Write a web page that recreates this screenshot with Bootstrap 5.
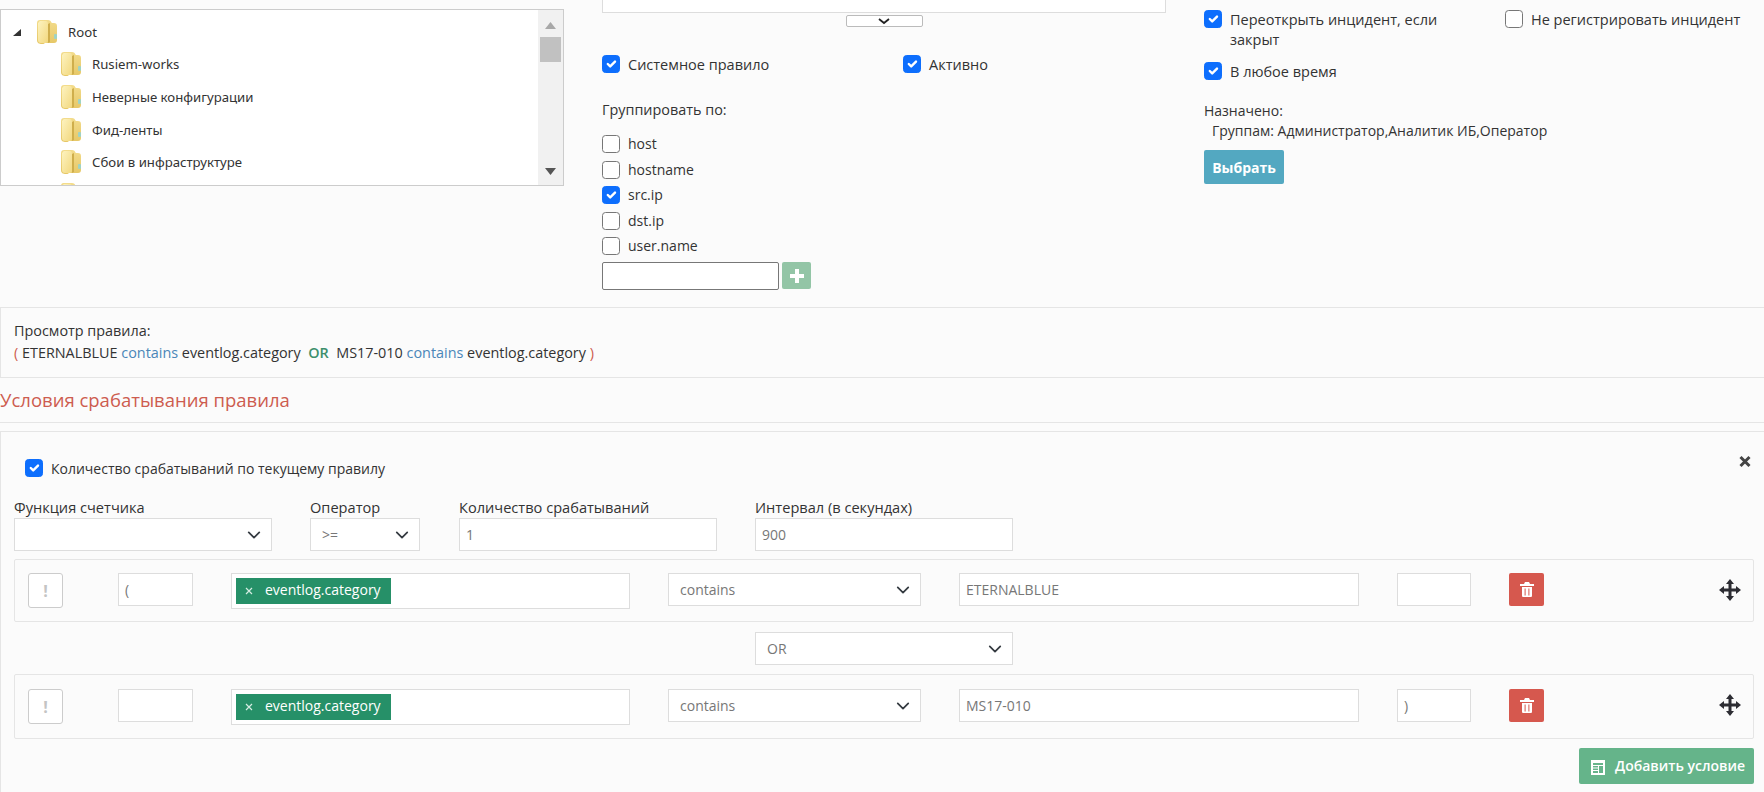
<!DOCTYPE html>
<html lang="ru">
<head>
  <meta charset="UTF-8" />
  <title>Правило</title>
  <meta name="viewport" content="width=device-width, initial-scale=1.0"/>
  <link href="https://cdn.jsdelivr.net/npm/bootstrap@5.3.3/dist/css/bootstrap.min.css" rel="stylesheet">
  <style>
    html, body { height: 792px; overflow: hidden; }
    body {
      background: #fbfbfb;
      color: #333;
      font-family: "Open Sans", "Noto Sans", sans-serif;
      font-size: 14px;
      line-height: 20px;
    }
    .form-check-input {
      width: 18px;
      height: 18px;
      margin: 0;
      flex: none;
      border-color: #777;
      border-radius: 4px;
    }
    .chk { display: flex; gap: 8px; align-items: flex-start; line-height: 19px; font-weight: 500; font-size: 14.5px; }

    /* top part */
    .top-part { display: flex; height: 307px; }
    .tree-col { width: 564px; padding-top: 9px; flex: none; }
    .mid-col { width: 564px; margin-left: 38px; flex: none; }
    .right-col { margin-left: 38px; padding-top: 10px; flex: 1; }
    .tree-box {
      height: 177px;
      background: #fff;
      border: 1px solid #ccc;
      display: flex;
      overflow: hidden;
      font-family: "Noto Sans", sans-serif;
      font-size: 13.200px;
    }
    .tree-list { flex: 1; overflow: hidden; padding: 8px 0 0 12px; }
    .tree-row { display: flex; align-items: center; height: 32.700px; gap: 11px; margin-left: 48px; white-space: nowrap; }
    .tree-row.is-root { margin-left: 0; height: 27px; margin-bottom: 3px; }
    .tree-row svg { flex: none; }
    .tree-arrow { margin-right: 5px; }
    .fake-scroll {
      width: 25px;
      background: #f1f1f1;
      display: flex;
      flex-direction: column;
      align-items: center;
      padding: 0 1px 0 0;
    }
    .scroll-up { margin-top: 12px; }
    .scroll-thumb { width: 21px; height: 25px; background: #c1c1c1; margin-top: 8px; }
    .scroll-down { margin-top: auto; margin-bottom: 10px; }
    .cut-box { height: 13px; background: #fff; border: 1px solid #ddd; border-top: 0; }
    .toggle-bar {
      width: 77px;
      height: 12px;
      margin: 2px auto 0;
      border: 1px solid #bbb;
      border-radius: 2px;
      background: #fff;
      display: flex;
      justify-content: center;
      align-items: center;
      padding: 0;
    }
    .flag-row { margin-top: 28px; display: flex; }
    .flag-row .chk:first-child { width: 301px; }
    .group-title { margin-top: 26px; font-weight: 500; font-size: 14.400px; }
    .group-list { margin-top: 15px; display: flex; flex-direction: column; gap: 7.500px; }
    .group-list .chk { height: 18px; line-height: 18px; font-weight: 400; font-size: 14px; }
    .add-group { display: flex; gap: 3px; margin-top: 7px; }
    .add-group input { width: 177px; height: 28px; border: 1px solid #777; border-radius: 2px; background: #fff; }
    .btn-plus {
      width: 29px;
      height: 27px;
      padding: 0;
      border: 0;
      border-radius: 2px;
      background: #93c5a6;
      display: flex;
      align-items: center;
      justify-content: center;
    }
    .right-flags { display: flex; }
    .right-flags .chk:first-child { width: 301px; }
    .right-flags .chk span { line-height: 19.500px; }
    .any-time { margin-top: 13px; }
    .assigned { margin-top: 19px; font-weight: 500; line-height: 21px; }
    .assigned-groups { padding-left: 8px; font-weight: 400; line-height: 20px; }
    .assigned-groups b { font-weight: 500; }
    .btn-pick {
      margin-top: 9px;
      width: 80px;
      height: 34px;
      padding: 0;
      border: 0;
      border-radius: 2px;
      background: #53a8c1;
      color: #fff;
      font-size: 14px;
      font-weight: 700;
    }

    /* rule preview */
    .rule-view {
      height: 71px;
      border: 1px solid #e5e5e5;
      border-right: 0;
      padding: 12px 13px;
      line-height: 22px;
      font-weight: 500;
      font-size: 14.400px;
    }
    .rv-blue { color: #4a86b8; }
    .rv-green { color: #3d8f6c; font-weight: 600; }
    .rv-red { color: #cd5c4f; }
    .section-head {
      height: 45px;
      display: flex;
      align-items: center;
      border-bottom: 1px solid #e5e5e5;
      color: #cd5c4f;
      font-size: 18.500px;
      font-weight: 500;
    }

    /* conditions */
    .cond-panel {
      margin-top: 8px;
      height: 400px;
      border: 1px solid #e5e5e5;
      border-right: 0;
      padding: 23px 10px 0 13px;
    }
    .counter-row { display: flex; justify-content: space-between; align-items: flex-start; }
    .counter-row .chk { margin: 4px 0 0 11px; font-weight: 400; font-size: 14px; }
    .close-x { margin-right: 3px; display: block; }
    .counter-grid {
      margin-top: 19px;
      display: grid;
      grid-template-columns: 258px 111px 258px 258px;
      column-gap: 38px;
      font-weight: 500;
      font-size: 14.600px;
    }
    .counter-grid label { display: block; line-height: 21px; }
    .counter-grid > :nth-child(2) select { width: 110px; }
    .form-control.flat, .form-select.flat {
      height: 33px;
      min-height: 33px;
      border: 1px solid #ddd;
      border-radius: 0;
      background-color: #fff;
      color: #777;
      font-size: 14px;
      line-height: 20px;
      padding-top: 0;
      padding-bottom: 0;
      font-weight: 400;
    }
    .form-control.flat { padding-left: 6px; padding-right: 6px; }
    .form-select.flat { padding-left: 11px; padding-right: 30px; background-position: right 8px center; background-size: 18px 14px; }
    .cond-row {
      margin-top: 8px;
      border: 1px solid #e5e5e5;
      border-radius: 2px;
      padding: 13px 13px 12px;
      display: grid;
      grid-template-columns: 35px 92px 399px 253px 400px 74px 35px 1fr;
      column-gap: 38px;
      align-items: start;
    }
    .cond-row > :nth-child(2) { margin-left: 17px; width: 75px; }
    .cond-row.is-second { padding-top: 14px; padding-bottom: 13px; margin-top: 9px; }
    .btn-not {
      width: 35px;
      height: 35px;
      padding: 0;
      background: #fff;
      border: 1px solid #ccc;
      border-radius: 3px;
      color: #c4c4c4;
      font-weight: 700;
      font-size: 16px;
    }
    .tag-field {
      height: 36px;
      background: #fff;
      border: 1px solid #ddd;
      padding: 4px;
    }
    .tag-chip {
      width: 155px;
      height: 26px;
      background: #269068;
      color: #fff;
      display: flex;
      align-items: center;
      gap: 12px;
      padding: 0 0 2px 9px;
      line-height: 24px;
    }
    .tag-chip svg { flex: none; margin-top: 2px; }
    .btn-trash {
      width: 35px;
      height: 33px;
      padding: 0;
      border: 0;
      border-radius: 2px;
      background: #d6584e;
      display: flex;
      align-items: center;
      justify-content: center;
    }
    .move-cell { justify-self: end; padding-top: 6px; margin-right: -1px; }
    .is-second .move-cell { padding-top: 5px; }
    .move-cell svg { display: block; }
    .or-select { margin: 10px 0 0 741px; width: 258px; }
    .add-line { display: flex; justify-content: flex-end; margin-top: 9px; }
    .btn-add {
      width: 175px;
      height: 36px;
      padding: 0 0 0 12px;
      border: 0;
      border-radius: 2px;
      background: #65b48a;
      color: #fff;
      font-size: 14px;
      font-weight: 600;
      display: flex;
      align-items: center;
      gap: 10px;
    }
    .btn-add svg { margin-top: 2px; }
  </style>
</head>
<body>

<svg width="0" height="0" class="d-block">
  <defs>
    <linearGradient id="fg" x1="0" y1="0" x2="0" y2="1">
      <stop offset="0" stop-color="#f3dc8c"/>
      <stop offset="1" stop-color="#e6c766"/>
    </linearGradient>
    <linearGradient id="ff" x1="0" y1="0" x2="1" y2="1">
      <stop offset="0" stop-color="#fdf3c0"/>
      <stop offset="1" stop-color="#f2d87f"/>
    </linearGradient>
    <symbol id="folder" viewBox="0 0 20 24">
      <path d="M3 0h8c2 0 3 1 3 2l1 1h2c2 0 3 1 3 3v14c0 2-1 3-3 3H8c-1 1-2 1-3 1-3 0-5-1-5-4V3c0-2 1-3 3-3z" fill="url(#fg)"/>
      <path d="M2 2c0-1 1-1 2-1h5c1 0 2 1 2 3v17c0 1-1 2-2 2H4c-2 0-3-1-3-3V3z" fill="url(#ff)"/>
      <path d="M11 4l2-1v19l-2 1z" fill="#cfae4c"/>
      <rect x="17" y="14" width="3" height="5" rx="1" fill="#9fd3c4"/>
    </symbol>
    <symbol id="trash" viewBox="0 0 14 15">
      <path d="M5 0h4l1 2h4v2H0V2h4zM2 5h10v8.500c0 1-.5 1.500-1.500 1.500h-7c-1 0-1.500-.5-1.500-1.500zm2.600 1.500v7h1v-7zm3.800 0v7h1v-7z" fill="#fff" fill-rule="evenodd"/>
    </symbol>
    <symbol id="move" viewBox="0 0 22 22">
      <path d="M11 0l4 5h-2.500v4.500H17V7l5 4-5 4v-2.500h-4.500V17H15l-4 5-4-5h2.500v-4.500H5V15l-5-4 5-4v2.500h4.500V5H7z" fill="#2d2d33"/>
    </symbol>
    <symbol id="chipx" viewBox="0 0 8 8">
      <path d="M1 1l6 6M7 1l-6 6" stroke="#d5ece2" stroke-width="1.200" fill="none"/>
    </symbol>
  </defs>
</svg>

<div class="top-part">
  <div class="tree-col">
    <div class="tree-box">
      <div class="tree-list">
        <div class="tree-row is-root">
          <svg class="tree-arrow" width="8" height="8" viewBox="0 0 8 8"><path d="M8 1v7H0z" fill="#333"/></svg>
          <svg width="20" height="24"><use href="#folder"/></svg>
          <span>Root</span>
        </div>
        <div class="tree-row"><svg width="20" height="24"><use href="#folder"/></svg><span>Rusiem-works</span></div>
        <div class="tree-row"><svg width="20" height="24"><use href="#folder"/></svg><span>Неверные конфигурации</span></div>
        <div class="tree-row"><svg width="20" height="24"><use href="#folder"/></svg><span>Фид-ленты</span></div>
        <div class="tree-row"><svg width="20" height="24"><use href="#folder"/></svg><span>Сбои в инфраструктуре</span></div>
        <div class="tree-row"><svg width="20" height="24"><use href="#folder"/></svg></div>
      </div>
      <div class="fake-scroll">
        <svg class="scroll-up" width="11" height="7" viewBox="0 0 11 7"><path d="M5.500 0L11 7H0z" fill="#a8a8a8"/></svg>
        <div class="scroll-thumb"></div>
        <svg class="scroll-down" width="11" height="7" viewBox="0 0 11 7"><path d="M0 0h11L5.500 7z" fill="#555"/></svg>
      </div>
    </div>
  </div>

  <div class="mid-col">
    <div class="cut-box"></div>
    <button class="toggle-bar" type="button">
      <svg width="12" height="7" viewBox="0 0 12 7"><path d="M1 1l5 4 5-4" stroke="#222" stroke-width="1.800" fill="none"/></svg>
    </button>
    <div class="flag-row">
      <label class="chk"><input class="form-check-input" type="checkbox" checked><span>Системное правило</span></label>
      <label class="chk"><input class="form-check-input" type="checkbox" checked><span>Активно</span></label>
    </div>
    <div class="group-title">Группировать по:</div>
    <div class="group-list">
      <label class="chk"><input class="form-check-input" type="checkbox"><span>host</span></label>
      <label class="chk"><input class="form-check-input" type="checkbox"><span>hostname</span></label>
      <label class="chk"><input class="form-check-input" type="checkbox" checked><span>src.ip</span></label>
      <label class="chk"><input class="form-check-input" type="checkbox"><span>dst.ip</span></label>
      <label class="chk"><input class="form-check-input" type="checkbox"><span>user.name</span></label>
    </div>
    <div class="add-group">
      <input type="text">
      <button class="btn-plus" type="button">
        <svg width="14" height="14" viewBox="0 0 14 14"><path d="M5 0h4v5h5v4H9v5H5V9H0V5h5z" fill="#fff"/></svg>
      </button>
    </div>
  </div>

  <div class="right-col">
    <div class="right-flags">
      <label class="chk"><input class="form-check-input" type="checkbox" checked><span>Переоткрыть инцидент, если<br>закрыт</span></label>
      <label class="chk"><input class="form-check-input" type="checkbox"><span>Не регистрировать инцидент</span></label>
    </div>
    <label class="chk any-time"><input class="form-check-input" type="checkbox" checked><span>В любое время</span></label>
    <div class="assigned">Назначено:</div>
    <div class="assigned-groups"><b>Группам:</b> Администратор,Аналитик ИБ,Оператор</div>
    <button class="btn btn-pick" type="button">Выбрать</button>
  </div>
</div>

<div class="rule-view">
  <div>Просмотр правила:</div>
  <div><span class="rv-red">(</span> ETERNALBLUE <span class="rv-blue">contains</span> eventlog.category &nbsp;<span class="rv-green">OR</span>&nbsp; MS17-010 <span class="rv-blue">contains</span> eventlog.category <span class="rv-red">)</span></div>
</div>

<div class="section-head">Условия срабатывания правила</div>

<div class="cond-panel">
  <div class="counter-row">
    <label class="chk"><input class="form-check-input" type="checkbox" checked><span>Количество срабатываний по текущему правилу</span></label>
    <svg class="close-x" width="12" height="13" viewBox="0 0 12 13"><path d="M1.500 2l9 9M10.500 2l-9 9" stroke="#444" stroke-width="3" fill="none"/></svg>
  </div>

  <div class="counter-grid">
    <div>
      <label>Функция счетчика</label>
      <select class="form-select flat"><option></option></select>
    </div>
    <div>
      <label>Оператор</label>
      <select class="form-select flat"><option>&gt;=</option></select>
    </div>
    <div>
      <label>Количество срабатываний</label>
      <input class="form-control flat" type="text" value="1">
    </div>
    <div>
      <label>Интервал (в секундах)</label>
      <input class="form-control flat" type="text" value="900">
    </div>
  </div>

  <div class="cond-row">
    <button class="btn-not" type="button">!</button>
    <input class="form-control flat" type="text" value="(">
    <div class="tag-field">
      <div class="tag-chip"><svg width="8" height="8"><use href="#chipx"/></svg><span>eventlog.category</span></div>
    </div>
    <select class="form-select flat"><option>contains</option></select>
    <input class="form-control flat" type="text" value="ETERNALBLUE">
    <input class="form-control flat" type="text" value="">
    <button class="btn-trash" type="button"><svg width="14" height="15"><use href="#trash"/></svg></button>
    <div class="move-cell"><svg width="22" height="22"><use href="#move"/></svg></div>
  </div>

  <select class="form-select flat or-select"><option>OR</option></select>

  <div class="cond-row is-second">
    <button class="btn-not" type="button">!</button>
    <input class="form-control flat" type="text" value="">
    <div class="tag-field">
      <div class="tag-chip"><svg width="8" height="8"><use href="#chipx"/></svg><span>eventlog.category</span></div>
    </div>
    <select class="form-select flat"><option>contains</option></select>
    <input class="form-control flat" type="text" value="MS17-010">
    <input class="form-control flat" type="text" value=")">
    <button class="btn-trash" type="button"><svg width="14" height="15"><use href="#trash"/></svg></button>
    <div class="move-cell"><svg width="22" height="22"><use href="#move"/></svg></div>
  </div>

  <div class="add-line">
    <button class="btn-add" type="button">
      <svg width="14" height="15" viewBox="0 0 14 15"><path d="M0 0h14v15H0zm2 3v2h10V3zm0 3v1.500h5V6zm6 0v7h4V6zM2 8.500V10h5V8.500zm0 2.500v2h5v-2z" fill="#fff" fill-rule="evenodd"/></svg>
      <span>Добавить условие</span>
    </button>
  </div>
</div>

<script src="https://cdn.jsdelivr.net/npm/bootstrap@5.3.3/dist/js/bootstrap.bundle.min.js"></script>
</body>
</html>
